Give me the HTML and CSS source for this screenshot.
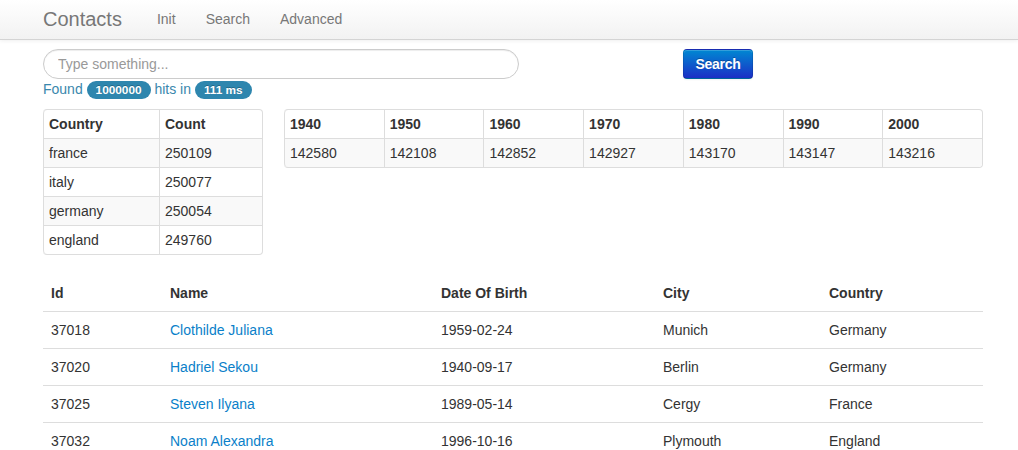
FILE: index.html
```html
<!DOCTYPE html>
<html>
<head>
<meta charset="utf-8">
<title>Contacts</title>
<link rel="stylesheet" href="styles.css">
</head>
<body>
<div class="navbar">
  <div class="container nav-inner">
    <a class="brand" href="#">Contacts</a>
    <ul class="nav">
      <li><a href="#">Init</a></li>
      <li><a href="#">Search</a></li>
      <li><a href="#">Advanced</a></li>
    </ul>
  </div>
</div>
<div class="container main">
  <div class="search-row">
    <div class="search-col">
      <input class="search-query" type="text" placeholder="Type something...">
      <div class="found">Found <span class="badge">1000000</span> hits in <span class="badge">111 ms</span></div>
    </div>
    <div class="btn-col">
      <button class="btn-primary" type="button">Search</button>
    </div>
  </div>
  <div class="facets">
    <div class="span3">
      <table class="tbl bordered striped">
        <thead><tr><th class="c1">Country</th><th>Count</th></tr></thead>
        <tbody>
          <tr><td>france</td><td>250109</td></tr>
          <tr><td>italy</td><td>250077</td></tr>
          <tr><td>germany</td><td>250054</td></tr>
          <tr><td>england</td><td>249760</td></tr>
        </tbody>
      </table>
    </div>
    <div class="span9">
      <table class="tbl bordered striped fixed">
        <thead><tr><th>1940</th><th>1950</th><th>1960</th><th>1970</th><th>1980</th><th>1990</th><th>2000</th></tr></thead>
        <tbody>
          <tr><td>142580</td><td>142108</td><td>142852</td><td>142927</td><td>143170</td><td>143147</td><td>143216</td></tr>
        </tbody>
      </table>
    </div>
  </div>
  <table class="results">
    <thead>
      <tr><th class="w-id">Id</th><th class="w-name">Name</th><th class="w-date">Date Of Birth</th><th class="w-city">City</th><th>Country</th></tr>
    </thead>
    <tbody>
      <tr><td>37018</td><td><a href="#">Clothilde Juliana</a></td><td>1959-02-24</td><td>Munich</td><td>Germany</td></tr>
      <tr><td>37020</td><td><a href="#">Hadriel Sekou</a></td><td>1940-09-17</td><td>Berlin</td><td>Germany</td></tr>
      <tr><td>37025</td><td><a href="#">Steven Ilyana</a></td><td>1989-05-14</td><td>Cergy</td><td>France</td></tr>
      <tr><td>37032</td><td><a href="#">Noam Alexandra</a></td><td>1996-10-16</td><td>Plymouth</td><td>England</td></tr>
    </tbody>
  </table>
</div>
</body>
</html>
```
FILE: styles.css
```css
* { box-sizing: border-box; }
html, body { margin: 0; padding: 0; }
body {
  font-family: "Liberation Sans", Arial, Helvetica, sans-serif;
  font-size: 14px;
  line-height: 20px;
  color: #333;
  background: #fff;
  overflow: hidden;
}
a { color: #0a7fc9; text-decoration: none; }
.container { width: 940px; margin-left: 43px; }

.navbar {
  height: 40px;
  background: linear-gradient(to bottom, #ffffff, #f2f2f2);
  border-bottom: 1px solid #d4d4d4;
  box-shadow: 0 1px 4px rgba(0,0,0,0.065);
}
.nav-inner { display: flex; align-items: center; height: 39px; }
.brand {
  font-size: 20px;
  line-height: 20px;
  color: #777;
  padding: 9px 20px 10px 0;
}
.nav { list-style: none; margin: 0; padding: 0; display: flex; }
.nav a {
  display: block;
  color: #777;
  padding: 9px 15px 10px;
  font-size: 14px;
}

.main { padding-top: 9px; }
.search-row { display: flex; }
.search-col { width: 640px; }
.search-query {
  display: block;
  width: 476px;
  height: 30px;
  padding: 4px 14px;
  border: 1px solid #ccc;
  border-radius: 15px;
  font-family: inherit;
  font-size: 14px;
  color: #555;
  box-shadow: inset 0 1px 1px rgba(0,0,0,0.075);
  outline: none;
}
.search-query::placeholder { color: #999; }
.found { color: #3a87ad; line-height: 20px; }
.badge {
  display: inline-block;
  padding: 2px 9px;
  font-size: 11.8px;
  font-weight: bold;
  line-height: 14px;
  color: #fff;
  background: #2e86ae;
  border-radius: 9px;
  text-shadow: 0 -1px 0 rgba(0,0,0,0.25);
  vertical-align: baseline;
}
.btn-col { width: 300px; }
.btn-primary {
  width: 70px;
  height: 30px;
  padding: 4px 0;
  font-family: inherit;
  font-size: 14px;
  font-weight: bold;
  letter-spacing: -0.3px;
  line-height: 20px;
  color: #fff;
  text-shadow: 0 -1px 0 rgba(0,0,0,0.25);
  background: linear-gradient(to bottom, #0088d2, #1b2fc6);
  border: 1px solid #1b36b8;
  border-color: rgba(0,0,0,0.1) rgba(0,0,0,0.1) rgba(0,0,0,0.25);
  border-radius: 4px;
  box-shadow: inset 0 1px 0 rgba(255,255,255,0.2), 0 1px 2px rgba(0,0,0,0.05);
}

.facets { display: flex; gap: 21px; margin-top: 10px; margin-bottom: 20px; }
.span3 { width: 220px; }
.span9 { width: 699px; }

.tbl {
  width: 100%;
  border-collapse: separate;
  border-spacing: 0;
  border: 1px solid #ddd;
  border-left: 0;
  border-radius: 4px;
}
.tbl.fixed { table-layout: fixed; }
.tbl th, .tbl td {
  padding: 4px 5px;
  line-height: 20px;
  text-align: left;
  border-left: 1px solid #ddd;
  border-top: 1px solid #ddd;
}
.tbl th { font-weight: bold; border-top: 0; }
.tbl .c1 { width: 116px; }
.tbl.striped tbody tr:nth-child(odd) td { background: #f9f9f9; }
.tbl thead tr:first-child th:first-child { border-top-left-radius: 4px; }
.tbl thead tr:first-child th:last-child { border-top-right-radius: 4px; }
.tbl tbody tr:last-child td:first-child { border-bottom-left-radius: 4px; }
.tbl tbody tr:last-child td:last-child { border-bottom-right-radius: 4px; }

.results {
  width: 100%;
  border-collapse: collapse;
  border-spacing: 0;
}
.results th, .results td {
  padding: 8px;
  line-height: 20px;
  text-align: left;
  vertical-align: top;
}
.results th { font-weight: bold; }
.results td { border-top: 1px solid #ddd; }
.w-id { width: 119px; }
.w-name { width: 271px; }
.w-date { width: 222px; }
.w-city { width: 166px; }
```
